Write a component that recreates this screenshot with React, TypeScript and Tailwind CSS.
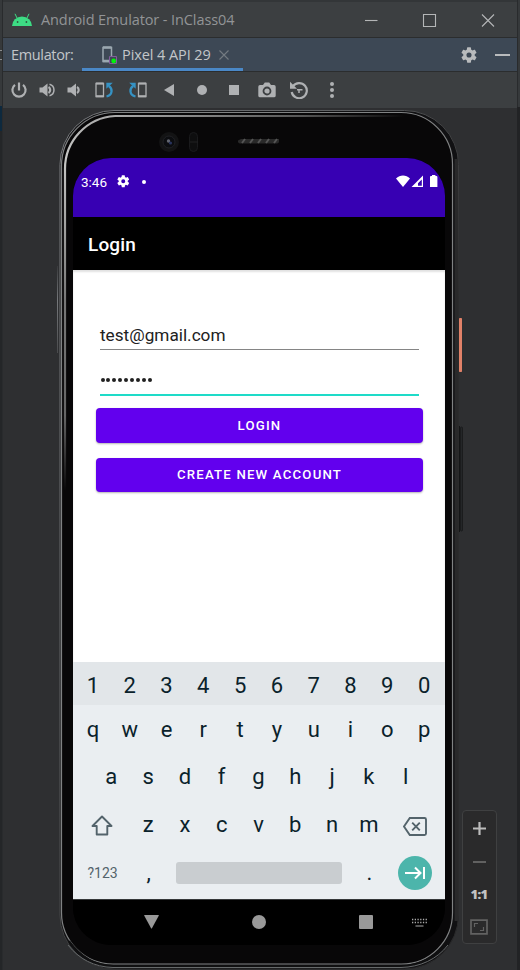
import type { ReactNode } from "react";

const UI_FONT = "font-['Open_Sans','Noto_Sans',sans-serif]";

function Slot({ w, children }: { w: string; children: ReactNode }) {
  return <div className={`flex h-full shrink-0 items-center justify-center ${w}`}>{children}</div>;
}

function Gear({ size, fill }: { size: number; fill: string }) {
  return (
    <svg width={size} height={size} viewBox="2 2 20 20" fill={fill}>
      <path d="M19.14 12.94c.04-.3.06-.61.06-.94s-.02-.64-.07-.94l2.03-1.58a.49.49 0 0 0 .12-.61l-1.92-3.32a.49.49 0 0 0-.59-.22l-2.39.96c-.5-.38-1.03-.7-1.62-.94l-.36-2.54a.48.48 0 0 0-.48-.41h-3.84a.47.47 0 0 0-.47.41l-.36 2.54c-.59.24-1.13.57-1.62.94l-2.39-.96a.48.48 0 0 0-.59.22L2.74 8.87c-.12.21-.08.47.12.61l2.03 1.58c-.05.3-.09.63-.09.94s.02.64.07.94l-2.03 1.58a.49.49 0 0 0-.12.61l1.92 3.32c.12.22.37.29.59.22l2.39-.96c.5.38 1.03.7 1.62.94l.36 2.54c.05.24.24.41.48.41h3.84c.24 0 .44-.17.47-.41l.36-2.54c.59-.24 1.13-.56 1.62-.94l2.39.96c.22.08.47 0 .59-.22l1.92-3.32a.47.47 0 0 0-.12-.61l-2.01-1.58zM12 15.2a3.2 3.2 0 1 1 0-6.4 3.2 3.2 0 0 1 0 6.4z" />
    </svg>
  );
}

function TitleBar() {
  return (
    <div className="flex h-[35px] shrink-0 items-center bg-[#3c3f41] pl-[9px]">
      <svg width="20" height="14" viewBox="0 0 20 14">
        <path d="M0 13a10 9.6 0 0 1 20 0z" fill="#3ddc84" />
        <path d="M5 5 3 .8M15 5l2-4.2" stroke="#3ddc84" strokeWidth="1" />
        <circle cx="5.6" cy="9" r=".9" fill="#2b5b41" />
        <circle cx="14.4" cy="9" r=".9" fill="#2b5b41" />
      </svg>
      <span className="ml-[9px] w-[314px] whitespace-nowrap pt-[2px] text-[14.5px] leading-none tracking-[-0.1px] text-[#929496]">
        Android Emulator - InClass04
      </span>
      <svg width="140" height="14" viewBox="0 0 140 14" fill="none" stroke="#b4b6b7" strokeWidth="1.1">
        <path d="M10 7.5h12.5" />
        <path d="M68.500 1.500h12v12h-12z" />
        <path d="m127 1.500 12 12m0-12-12 12" />
      </svg>
    </div>
  );
}

function TabBar() {
  return (
    <div className="flex h-[33px] shrink-0 bg-[#3d4855] text-[14.5px] text-[#c3c6c9]">
      <div className="flex w-[79px] items-center pl-2 pt-px tracking-[-0.350px]">Emulator:</div>
      <div className="flex w-[161px] items-center border-b-[3px] border-[#4a88c7] pl-5 pt-[4px]">
        <svg width="16" height="18" viewBox="0 0 16 18" fill="none">
          <path d="M7 15.5H1V1.5h8.5v9" stroke="#9aa7b0" strokeWidth="1.5" />
          <path d="M1 1.4h8.5M1 15h6" stroke="#9aa7b0" strokeWidth="2.5" />
          <path d="M7.5 10.5h7v7h-7z" stroke="#825d9c" strokeWidth="1" />
          <circle cx="11.7" cy="15" r="2.4" fill="#00f20a" />
        </svg>
        <span className="ml-[4px] w-[90px] whitespace-nowrap tracking-[-0.080px]">Pixel 4 API 29</span>
        <svg width="10" height="10" viewBox="0 0 10 10" className="ml-[7px]" stroke="#747b82" strokeWidth="1.1">
          <path d="m.5.5 9 9m0-9-9 9" />
        </svg>
      </div>
      <div className="flex flex-1 items-center justify-end gap-[18px] pr-[7px] pt-px">
        <Gear size={16} fill="#b9bbbd" />
        <div className="h-[2px] w-[15px] bg-[#b9bbbd]" />
      </div>
    </div>
  );
}

function Toolbar() {
  const c = "#afb1b3";
  return (
    <div className="flex h-[36px] shrink-0 bg-[#3c3f41]">
      <Slot w="w-[31px]">
        <svg width="16" height="16" viewBox="0 0 16 16" fill="none" stroke={c} strokeWidth="2.200">
          <path d="M4 2.800a6.600 6.600 0 1 0 8 0M8 .5v8" />
        </svg>
      </Slot>
      <Slot w="w-[27px]">
        <svg width="18" height="14" viewBox="0 0 18 14" fill="none" stroke={c}>
          <path d="M.5 4.500h3L8.500.5v13L3.500 9.500h-3z" fill={c} stroke="none" />
          <path d="M9.500 4a3.500 3.500 0 0 1 0 6" strokeWidth="2.200" />
          <path d="M10.500 1.200a6 6 0 0 1 0 11.600" strokeWidth="1.500" />
        </svg>
      </Slot>
      <Slot w="w-[26px]">
        <svg width="14" height="14" viewBox="0 0 14 14" fill="none" stroke={c}>
          <path d="M.5 4.500h3.500L9 .5v13L4 9.500H.5z" fill={c} stroke="none" />
          <path d="M10 4a3.500 3.500 0 0 1 0 6" strokeWidth="2.200" />
        </svg>
      </Slot>
      <Slot w="w-[34px]">
        <svg width="19" height="16" viewBox="0 0 19 16" fill="none">
          <path d="M1 1.500h7.500v13H1z" stroke={c} strokeWidth="1.300" />
          <path d="M1 1.600h7.500M1 14.300h7.500" stroke={c} strokeWidth="2" />
          <path d="M11.500 14.500c6.300-1.500 6.300-8 2.300-10.500" stroke="#3592c4" strokeWidth="2.300" />
          <path d="M11.300.8h6.500l-6.500 6z" fill="#3592c4" />
        </svg>
      </Slot>
      <Slot w="w-[33px]">
        <svg width="19" height="16" viewBox="0 0 19 16" fill="none" className="-ml-px">
          <path d="M10.500 1.500H18v13h-7.500z" stroke={c} strokeWidth="1.300" />
          <path d="M10.500 1.600H18M10.500 14.300H18" stroke={c} strokeWidth="2" />
          <path d="M7.500 14.500C1.200 13 1.200 6.500 5.200 4" stroke="#3592c4" strokeWidth="2.300" />
          <path d="M7.700.8H1.200l6.500 6z" fill="#3592c4" />
        </svg>
      </Slot>
      <Slot w="w-[30px]">
        <svg width="10" height="12" viewBox="0 0 10 12"><path d="M10 0v12L0 6z" fill={c} /></svg>
      </Slot>
      <Slot w="w-[36px]"><div className="size-[10px] rounded-full bg-[#afb1b3]" /></Slot>
      <Slot w="w-[28px]"><div className="size-[10px] bg-[#afb1b3]" /></Slot>
      <Slot w="w-[38px]">
        <svg width="18" height="16" viewBox="0 0 18 16">
          <path d="M2 3h3l1.800-2.500h4.400L13 3h3a1.700 1.700 0 0 1 1.700 1.700v9A1.700 1.700 0 0 1 16 15.300H2A1.700 1.700 0 0 1 .3 13.700v-9A1.700 1.700 0 0 1 2 3z" fill={c} />
          <circle cx="9" cy="9" r="3.500" fill={c} stroke="#3c3f41" strokeWidth="1.800" />
        </svg>
      </Slot>
      <Slot w="w-[26px]">
        <svg width="18" height="18" viewBox="0 0 18 18" fill="none" stroke={c}>
          <path d="M3 5.200A7.600 7.600 0 1 1 1.700 11" strokeWidth="2.200" />
          <path d="M0 .8v7h7z" fill={c} stroke="none" />
          <path d="M7 8.700h5.500M9 8.700V12" strokeWidth="1.500" />
        </svg>
      </Slot>
      <Slot w="w-[40px]">
        <div className="flex flex-col gap-[2px]">
          {[0, 1, 2].map((i) => <div key={i} className="size-1 rounded-full bg-[#afb1b3]" />)}
        </div>
      </Slot>
    </div>
  );
}

/* Metal rim, camera, speaker and side buttons of the device body. */
function Chassis() {
  return (
    <svg className="absolute left-0 top-0" width="410" height="863" viewBox="55 107 410 863" fill="none" aria-hidden="true">
      <defs>
        <linearGradient id="outer" x1="60" y1="109" x2="458" y2="300" gradientUnits="userSpaceOnUse">
          <stop offset="0" stopColor="#7b7d80" />
          <stop offset=".6" stopColor="#5c5e60" />
          <stop offset="1" stopColor="#2b2b2c" />
        </linearGradient>
        <linearGradient id="shineLeft" x1="0" y1="112" x2="0" y2="490" gradientUnits="userSpaceOnUse">
          <stop offset="0" stopColor="#aaa" />
          <stop offset=".12" stopColor="#c7c7c5" />
          <stop offset=".5" stopColor="#777" />
          <stop offset=".8" stopColor="#666" />
          <stop offset="1" stopColor="#080708" />
        </linearGradient>
        <linearGradient id="shineTop" x1="115" y1="0" x2="405" y2="0" gradientUnits="userSpaceOnUse">
          <stop offset="0" stopColor="#aaa" />
          <stop offset=".65" stopColor="#555" />
          <stop offset="1" stopColor="#080708" />
        </linearGradient>
        <linearGradient id="key" x1="0" y1="265" x2="0" y2="352" gradientUnits="userSpaceOnUse">
          <stop offset="0" stopColor="#3a3b3d" />
          <stop offset=".4" stopColor="#77797c" />
          <stop offset="1" stopColor="#4a4b4d" />
        </linearGradient>
      </defs>
      <rect x="60" y="109.500" width="398.500" height="858.500" rx="54" fill="#111113" stroke="url(#outer)" />
      <path d="M456.300 158v762" stroke="#29292a" strokeWidth="3.400" />
      <path
        d="M61.500 165a53.500 53.500 0 0 1 53.500-53.500h286a51.500 51.500 0 0 1 51.500 51.500v749a51 51 0 0 1-51 51H113a51.500 51.500 0 0 1-51.500-51.500z"
        fill="#080708"
        stroke="#808283"
        strokeWidth="1.200"
      />
      <path d="M65 490V168a53 53 0 0 1 50-53" stroke="url(#shineLeft)" strokeWidth="2.200" />
      <path d="M115 115h290" stroke="url(#shineTop)" strokeWidth="2" />
      <path d="M69 940c11 15 25 24.500 44 25h288c19-.5 36-9 46-25" stroke="#101011" strokeWidth="2" />
      <path d="M68 944c11 14 26 22 45 22.500h288c19-.5 36-8 47-22.500" stroke="#66696a" strokeWidth="1" />
      <path d="M57.500 265v87" stroke="url(#key)" />
      <circle cx="169" cy="141" r="10" fill="#131314" />
      <circle cx="169" cy="141" r="6" fill="#0c0d10" stroke="#202125" />
      <circle cx="168.500" cy="140" r="1.700" fill="#626570" />
      <circle cx="170.500" cy="142" r="1.600" fill="#28335c" />
      <rect x="189.500" y="131.500" width="8" height="19" rx="4" fill="#0e0e0f" stroke="#1a1a1c" />
      <path d="M190 141h8" stroke="#202022" />
      <path d="M241 138h38v2.500a2 2 0 0 1-2 2h-37a2 2 0 0 1-2-2v-1z" fill="#292929" />
      <path d="m242 142 3-4m5 4 3-4m5 4 3-4m5 4 3-4m5 4 3-4" stroke="#555" strokeWidth="2" />
      <rect x="459" y="317" width="3" height="54" rx=".7" fill="#e18168" />
      <path d="M459.500 425v106" stroke="#141516" />
      <rect x="460.500" y="426" width="2" height="104" rx="1" fill="#242628" stroke="#1b1c1d" />
    </svg>
  );
}

function StatusBar() {
  return (
    <div className="flex h-[59px] shrink-0 items-start bg-[#3700b3] pl-2 pt-[16px]">
      <span className="w-[36px] text-[13.500px] leading-[17px] text-white">3:46</span>
      <div className="flex h-[15px] items-center">
        <Gear size={12.500} fill="#fff" />
        <div className="ml-[12px] size-1 rounded-full bg-white" />
      </div>
      <svg className="ml-auto mr-[7px]" width="42" height="14" viewBox="0 0 42 14" fill="#fff">
        <path d="M0 4.600C4 .4 10 .4 14 4.600L7 13z" />
        <path d="M27 1.500V13H15.500zM25.800 5.500l-3.800 3.800V11.800h3.800z" fillRule="evenodd" />
        <path d="M36 2V1h3.400v1h1a1 1 0 0 1 1 1v10h-7.400V3a1 1 0 0 1 1-1z" />
      </svg>
    </div>
  );
}

function LoginForm() {
  const button =
    "flex items-center justify-center rounded-[4px] bg-[#6200ee] text-[13.200px] font-medium tracking-[1.200px] text-white shadow-[0_1px_2px_rgba(0,0,0,0.3)]";
  return (
    <div className="flex flex-1 flex-col bg-white pl-[23px] pr-[22px] shadow-[inset_0_2px_2px_rgba(0,0,0,0.12)]">
      <div className="mx-[4px] mt-[50px] h-[30px] border-b border-[#858585] pt-[4px] text-[17.200px] leading-[22px] text-[#212121]">
        test@gmail.com
      </div>
      <div className="mx-[4px] flex h-[46px] items-center gap-[1.900px] border-b-2 border-[#1edbc8] pl-[0.500px] pt-[15px]">
        {Array.from({ length: 9 }, (_, i) => (
          <div key={i} className="size-[4px] rounded-full bg-[#212121]" />
        ))}
      </div>
      <button className={`${button} mt-[12px] h-[35px] pt-px`}>LOGIN</button>
      <button className={`${button} mt-[15px] h-[34px]`}>CREATE NEW ACCOUNT</button>
    </div>
  );
}

function Keys({ chars }: { chars: string }) {
  return (
    <>
      {chars.split("").map((ch) => (
        <div key={ch} className="flex h-full w-[36.800px] shrink-0 items-center justify-center">{ch}</div>
      ))}
    </>
  );
}

function Keyboard() {
  return (
    <div className="flex h-[237px] shrink-0 flex-col bg-[#eaeef1] text-[22px] leading-none text-[#0a222b]">
      <div className="flex h-[43px] shrink-0 justify-center bg-[#e2e6e9] pt-[4px] pr-px"><Keys chars="1234567890" /></div>
      <div className="flex h-[48px] shrink-0 justify-center pt-px pr-px"><Keys chars="qwertyuiop" /></div>
      <div className="flex h-[48px] shrink-0 justify-center pr-px"><Keys chars="asdfghjkl" /></div>
      <div className="flex h-[48px] shrink-0 justify-center pr-px">
        <Slot w="w-[55.200px]">
          <svg width="22" height="21" viewBox="0 0 22 21" fill="none" stroke="#53636b" strokeWidth="1.900" strokeLinejoin="round">
            <path d="M11 1.500 1.500 11h4.200v8.500h10.600V11h4.200z" />
          </svg>
        </Slot>
        <Keys chars="zxcvbnm" />
        <Slot w="w-[55.200px]">
          <svg width="24" height="19" viewBox="0 0 24 19" fill="none" stroke="#53636b" strokeWidth="1.900" className="mt-[3px]">
            <path d="M6.800 1h14.700a1.500 1.500 0 0 1 1.500 1.500v14a1.500 1.500 0 0 1-1.500 1.500H6.800L1 9.500zM9.200 5.700l7.600 7.600m0-7.600-7.600 7.600" />
          </svg>
        </Slot>
      </div>
      <div className="flex h-[48px] shrink-0 items-center justify-center pb-px">
        <div className="flex w-[55.200px] justify-center text-[14px] text-[#53636b]">?123</div>
        <Keys chars="," />
        <div className="mx-[9px] h-[22px] w-[166px] rounded-[3px] bg-[#c9cdd0]" />
        <Keys chars="." />
        <Slot w="w-[55.200px]">
          <div className="flex size-[34px] items-center justify-center rounded-full bg-[#4cb5ab]">
            <svg width="20" height="14" viewBox="0 0 20 14" fill="none" stroke="#fff" strokeWidth="2">
              <path d="M0 7h15.500M10 1.500 15.500 7 10 12.500M19 1v12" />
            </svg>
          </div>
        </Slot>
      </div>
    </div>
  );
}

function NavBar() {
  return (
    <div className="flex h-[46px] shrink-0 items-center border-t border-[#353839] bg-black pb-px pl-[71px]">
      <svg width="15" height="14" viewBox="0 0 16 14" fill="#999" preserveAspectRatio="none"><path d="M.8 0h14.400c.6 0 .7.300.5.800L8.300 13.500h-.6L.3.800C.1.300.2 0 .8 0z" /></svg>
      <div className="ml-[93px] size-[14px] rounded-full bg-[#999]" />
      <div className="ml-[93px] size-[14px] rounded-[1px] bg-[#999]" />
      <svg className="ml-[39px]" width="15" height="9" viewBox="0 0 15 9" stroke="#aaa">
        <path d="M0 1.500h15M0 4.500h15" strokeWidth="1.300" strokeDasharray="1.300 1.420" />
        <path d="M3.500 8h8" strokeWidth="1.200" />
      </svg>
    </div>
  );
}

function ZoomPanel() {
  return (
    <div className="mt-[702px] ml-[4px] flex h-[134px] w-[35px] shrink-0 flex-col items-center rounded-[4px] border border-[#3f4041] bg-[#2a2a2b] pr-px">
      <svg className="mt-[11px]" width="13" height="13" viewBox="0 0 13 13" stroke="#bcbcbc" strokeWidth="2.200"><path d="M0 6.500h13M6.500 0v13" /></svg>
      <div className="mt-[26px] h-[2px] w-[13px] bg-[#616161]" />
      <div className="mt-[23px] flex h-[16px] items-center font-['Open_Sans',sans-serif] text-[13px] font-extrabold leading-none tracking-[-0.600px] text-[#c2c2c2]">1:1</div>
      <svg className="mt-[17px]" width="18" height="16" viewBox="0 0 18 16" fill="none" stroke="#626262">
        <path d="M1 1.200h16v13.600H1z" strokeWidth="1.700" />
        <path d="M4.500 8V4.500H8M10 11.500h3.500V8" strokeWidth="1.200" />
      </svg>
    </div>
  );
}

export default function App() {
  return (
    <div className={`flex h-[970px] w-[520px] overflow-hidden bg-[#2c2e30] ${UI_FONT}`}>
      <div className="flex w-[3px] shrink-0 flex-col border-r border-[#292b2d] bg-[#36393b]">
        <div className="mt-[50px] h-[10px] w-[2px] border-y border-[#8b8d8f]" />
        <div className="mt-[46px] h-[25px] bg-[#0d293e]" />
        <div className="flex-1 bg-[#242628]" />
      </div>
      <div className="flex w-[514px] shrink-0 flex-col">
        <div className="h-[2px] shrink-0 bg-[#333638]" />
        <TitleBar />
        <div className="h-px shrink-0 bg-[#2b2d2e]" />
        <TabBar />
        <div className="h-px shrink-0 bg-[#2b2d2e]" />
        <Toolbar />
        <div className="flex h-[862px] shrink-0 items-start bg-[#2e2f31] pl-[52px]">
          <div className="relative h-[862px] w-[403px] shrink-0">
            <Chassis />
            <div className="relative ml-[18px] mt-[50px] flex h-[787px] w-[372px] flex-col overflow-hidden rounded-[38px] bg-black font-['Roboto',sans-serif]">
              <StatusBar />
              <div className="flex h-[53px] shrink-0 items-center bg-black pl-[15px] pt-[3px] text-[19px] font-medium tracking-[0.150px] text-white">Login</div>
              <LoginForm />
              <Keyboard />
              <NavBar />
            </div>
          </div>
          <ZoomPanel />
        </div>
      </div>
      <div className="flex w-[3px] shrink-0 flex-col bg-[#2b2d2f]">
        <div className="h-[107px] border-l border-[#292b2d] bg-[#36393b]" />
        <div className="flex-1 bg-[#222325]" />
      </div>
    </div>
  );
}
